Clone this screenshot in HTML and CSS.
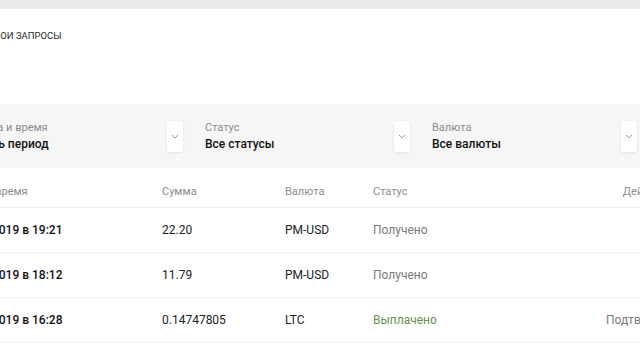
FILE: index.html
```html
<!DOCTYPE html>
<html lang="ru">
<head>
  <meta charset="UTF-8">
  <meta name="viewport" content="width=device-width, initial-scale=1.0">
  <title>Мои запросы</title>
  <link rel="stylesheet" href="styles.css">
</head>
<body>

  <div class="topbar"></div>

  <div class="page">
    <h1 class="title">Мои запросы</h1>

    <div class="filters">
      <div class="filter">
        <div class="filter-text">
          <div class="filter-label">Дата и время</div>
          <div class="filter-value">Весь период</div>
        </div>
        <div class="filter-btn">
          <svg width="8" height="5" viewBox="0 0 8 5"><path d="M1 1l3 3 3-3" fill="none" stroke="#9a9a9a" stroke-width="1"/></svg>
        </div>
      </div>
      <div class="filter">
        <div class="filter-text">
          <div class="filter-label">Статус</div>
          <div class="filter-value">Все статусы</div>
        </div>
        <div class="filter-btn">
          <svg width="8" height="5" viewBox="0 0 8 5"><path d="M1 1l3 3 3-3" fill="none" stroke="#9a9a9a" stroke-width="1"/></svg>
        </div>
      </div>
      <div class="filter">
        <div class="filter-text">
          <div class="filter-label">Валюта</div>
          <div class="filter-value">Все валюты</div>
        </div>
        <div class="filter-btn">
          <svg width="8" height="5" viewBox="0 0 8 5"><path d="M1 1l3 3 3-3" fill="none" stroke="#9a9a9a" stroke-width="1"/></svg>
        </div>
      </div>
    </div>

    <div class="table">
      <div class="row head">
        <div>Дата и время</div>
        <div>Сумма</div>
        <div>Валюта</div>
        <div>Статус</div>
        <div class="actions">Действия</div>
      </div>
      <div class="row">
        <div class="date">16.10.2019 в 19:21</div>
        <div>22.20</div>
        <div>PM-USD</div>
        <div class="status">Получено</div>
        <div class="actions"></div>
      </div>
      <div class="row">
        <div class="date">16.10.2019 в 18:12</div>
        <div>11.79</div>
        <div>PM-USD</div>
        <div class="status">Получено</div>
        <div class="actions"></div>
      </div>
      <div class="row">
        <div class="date">16.10.2019 в 16:28</div>
        <div>0.14747805</div>
        <div>LTC</div>
        <div class="status paid">Выплачено</div>
        <div class="actions link">Подтвердить</div>
      </div>
    </div>
  </div>

</body>
</html>
```

FILE: styles.css
```css
body {
  font-family: 'Roboto', 'Noto Sans', sans-serif;
  margin: 0;
  padding: 0;
  background: #fff;
  color: #1a1a1a;
  overflow: hidden;
}

.topbar {
  height: 9px;
  background-color: #ebebeb;
}

.page {
  margin-left: -42px;
  width: 760px;
}

.title {
  margin: 21px 0 0 34px;
  font-size: 9.5px;
  line-height: 12px;
  font-weight: 400;
  text-transform: uppercase;
  color: #2a2a2a;
}

/* Filters */
.filters {
  display: flex;
  gap: 22px;
  margin-top: 62px;
  height: 64px;
  padding: 0 0 0 20px;
  background-color: #f6f6f6;
  box-sizing: border-box;
  align-items: center;
}

.filter {
  display: flex;
  align-items: center;
  width: 205px;
  flex-shrink: 0;
}

.filter-text {
  flex: 1;
  padding-top: 1px;
}

.filter-label {
  font-size: 11px;
  line-height: 14px;
  color: #8c8c8c;
}

.filter-value {
  font-size: 12px;
  line-height: 16px;
  font-weight: 500;
  color: #111;
  margin-top: 1px;
}

.filter-btn {
  width: 16px;
  height: 31px;
  background-color: #fff;
  border-radius: 3px;
  box-shadow: 0 1px 3px rgba(0, 0, 0, 0.08);
  display: flex;
  align-items: center;
  justify-content: center;
}

/* Table */
.table {
  margin-top: 7px;
  width: 715px;
}

.row {
  display: grid;
  grid-template-columns: 204px 123px 88px 233px 1fr;
  align-items: center;
  height: 44px;
  border-bottom: 1px solid #efefef;
  font-size: 12px;
  color: #222;
}

.row.head {
  height: 32px;
  font-size: 11px;
  color: #8c8c8c;
}

.date {
  font-weight: 500;
  color: #111;
}

.status {
  color: #7a7a7a;
}

.status.paid {
  color: #6b8f4e;
}

.actions {
  text-align: right;
}

.link {
  color: #7a7a7a;
}
```
